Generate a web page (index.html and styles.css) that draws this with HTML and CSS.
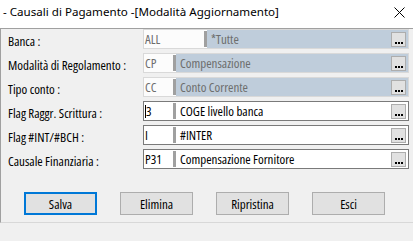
FILE: index.html
```html
<!DOCTYPE html>
<html lang="it">
<head>
    <meta charset="UTF-8">
    <meta name="viewport" content="width=device-width, initial-scale=1.0">
    <title>Causali di Pagamento</title>
    <link rel="stylesheet" href="styles.css">
</head>
<body>

    <div class="titlebar">
        <span class="title">- Causali di Pagamento -[Modalità Aggiornamento]</span>
        <svg class="close" width="11" height="11" viewBox="0 0 11 11">
            <path d="M0.5 0.5 L10.5 10.5 M10.5 0.5 L0.5 10.5" stroke="#000" stroke-width="1" fill="none"/>
        </svg>
    </div>

    <div class="dialog">
        <div class="rows">
            <div class="row">
                <span class="label">Banca :</span>
                <div class="field disabled">
                    <span class="code wide">ALL</span>
                    <span class="sep"></span>
                    <span class="desc">*Tutte</span>
                    <span class="dots"><svg width="13" height="13" viewBox="0 0 13 13"><path d="M3 9h2v2H3zM6 9h2v2H6zM9 9h2v2H9z" fill="#000"/></svg></span>
                </div>
            </div>
            <div class="row">
                <span class="label">Modalità di Regolamento :</span>
                <div class="field disabled">
                    <span class="code">CP</span>
                    <span class="sep"></span>
                    <span class="desc">Compensazione</span>
                    <span class="dots"><svg width="13" height="13" viewBox="0 0 13 13"><path d="M3 9h2v2H3zM6 9h2v2H6zM9 9h2v2H9z" fill="#000"/></svg></span>
                </div>
            </div>
            <div class="row">
                <span class="label">Tipo conto :</span>
                <div class="field disabled">
                    <span class="code">CC</span>
                    <span class="sep"></span>
                    <span class="desc">Conto Corrente</span>
                    <span class="dots"><svg width="13" height="13" viewBox="0 0 13 13"><path d="M3 9h2v2H3zM6 9h2v2H6zM9 9h2v2H9z" fill="#000"/></svg></span>
                </div>
            </div>
            <div class="row">
                <span class="label">Flag Raggr. Scrittura :</span>
                <div class="field">
                    <span class="code"><span class="caret"></span>3</span>
                    <span class="sep"></span>
                    <span class="desc">COGE livello banca</span>
                    <span class="dots"><svg width="13" height="13" viewBox="0 0 13 13"><path d="M3 9h2v2H3zM6 9h2v2H6zM9 9h2v2H9z" fill="#000"/></svg></span>
                </div>
            </div>
            <div class="row">
                <span class="label">Flag #INT/#BCH :</span>
                <div class="field">
                    <span class="code">I</span>
                    <span class="sep"></span>
                    <span class="desc">#INTER</span>
                    <span class="dots"><svg width="13" height="13" viewBox="0 0 13 13"><path d="M3 9h2v2H3zM6 9h2v2H6zM9 9h2v2H9z" fill="#000"/></svg></span>
                </div>
            </div>
            <div class="row">
                <span class="label">Causale Finanziaria :</span>
                <div class="field">
                    <span class="code">P31</span>
                    <span class="sep"></span>
                    <span class="desc">Compensazione Fornitore</span>
                    <span class="dots"><svg width="13" height="13" viewBox="0 0 13 13"><path d="M3 9h2v2H3zM6 9h2v2H6zM9 9h2v2H9z" fill="#000"/></svg></span>
                </div>
            </div>
        </div>

        <div class="buttons">
            <button class="btn default">Salva</button>
            <button class="btn">Elimina</button>
            <button class="btn">Ripristina</button>
            <button class="btn">Esci</button>
        </div>
    </div>

</body>
</html>
```

FILE: styles.css
```css
body {
    margin: 0;
    width: 413px;
    height: 241px;
    overflow: hidden;
    background-color: #f0f0f0;
    font-family: "Open Sans", sans-serif;
    font-stretch: 77%;
    font-size: 13px;
    color: #000;
}
.titlebar {
    height: 28px;
    background-color: #fff;
    display: flex;
    align-items: flex-start;
    justify-content: space-between;
    padding: 0 8px 0 3px;
    box-sizing: border-box;
}
.title {
    font-family: "Noto Sans", sans-serif;
    font-stretch: normal;
    font-size: 11.6px;
    line-height: 16px;
    margin-top: 4px;
}
.close {
    margin-top: 7px;
}
.dialog {
    height: 195px;
    box-sizing: border-box;
    border-top: 1px solid #a0a0a0;
    border-left: 1px solid #a0a0a0;
    border-bottom: 1px solid #d8d8d8;
}
.rows {
    display: flex;
    flex-direction: column;
    gap: 4px;
    padding-left: 7px;
}
.row {
    display: flex;
    height: 20px;
}
.label {
    width: 135px;
    line-height: 20px;
    padding-top: 2px;
    box-sizing: border-box;
    white-space: nowrap;
}
.field {
    width: 266px;
    height: 20px;
    box-sizing: border-box;
    border: 1px solid #7a7a7a;
    background-color: #fff;
    display: flex;
    align-items: center;
    line-height: 18px;
}
.field.disabled {
    border-color: #d9d9d9;
}
.code {
    width: 29px;
    padding-left: 1px;
    box-sizing: border-box;
    height: 18px;
    display: flex;
    align-items: center;
}
.code.wide {
    width: 60px;
}
.disabled .code {
    color: #6d6d6d;
    background-color: #fcfcfc;
}
.caret {
    width: 1px;
    height: 13px;
    background-color: #000;
}
.sep {
    width: 3px;
    height: 16px;
    background-color: #a0a0a0;
}
.desc {
    flex: 1;
    height: 18px;
    padding-left: 4px;
    white-space: nowrap;
}
.disabled .desc {
    background-color: #bfcddb;
    color: #6d6d6d;
}
.dots {
    width: 15px;
    height: 15px;
    box-sizing: border-box;
    border: 1px solid #adadad;
    background-color: #e1e1e1;
    margin-left: -17px;
    margin-right: 2px;
    display: flex;
}
.buttons {
    display: flex;
    gap: 23px;
    padding-left: 23px;
    margin-top: 23px;
}
.btn {
    width: 73px;
    height: 23px;
    box-sizing: border-box;
    border: 1px solid #adadad;
    background-color: #e1e1e1;
    font-family: "Open Sans", sans-serif;
    font-stretch: 77%;
    font-size: 13px;
    color: #000;
    padding: 0;
}
.btn.default {
    border: 2px solid #0078d7;
}
```
